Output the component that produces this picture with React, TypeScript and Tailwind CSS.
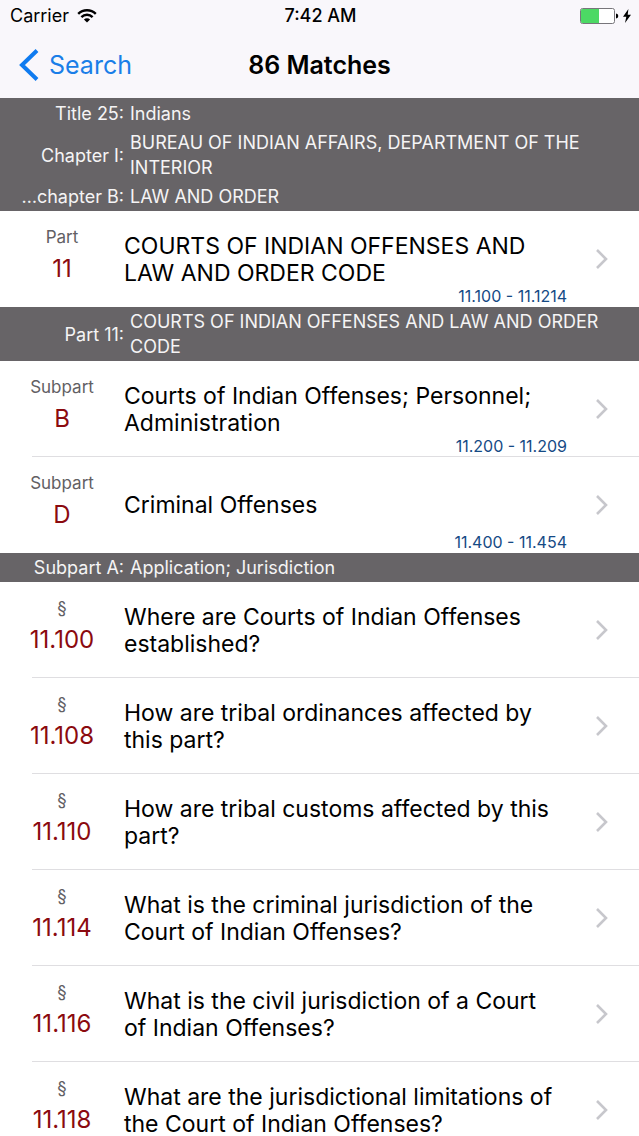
type Heading = {
	label: string;
	text: string;
};

type Match = {
	kind: string;
	number: string;
	title: string;
	range?: string;
};

type Section = {
	headings: Heading[];
	matches: Match[];
};

const sections: Section[] = [
	{
		headings: [
			{ label: "Title 25:", text: "Indians" },
			{ label: "Chapter I:", text: "BUREAU OF INDIAN AFFAIRS, DEPARTMENT OF THE INTERIOR" },
			{ label: "…chapter B:", text: "LAW AND ORDER" },
		],
		matches: [
			{
				kind: "Part",
				number: "11",
				title: "COURTS OF INDIAN OFFENSES AND LAW AND ORDER CODE",
				range: "11.100 - 11.1214",
			},
		],
	},
	{
		headings: [{ label: "Part 11:", text: "COURTS OF INDIAN OFFENSES AND LAW AND ORDER CODE" }],
		matches: [
			{
				kind: "Subpart",
				number: "B",
				title: "Courts of Indian Offenses; Personnel; Administration",
				range: "11.200 - 11.209",
			},
			{ kind: "Subpart", number: "D", title: "Criminal Offenses", range: "11.400 - 11.454" },
		],
	},
	{
		headings: [{ label: "Subpart A:", text: "Application; Jurisdiction" }],
		matches: [
			{ kind: "§", number: "11.100", title: "Where are Courts of Indian Offenses established?" },
			{ kind: "§", number: "11.108", title: "How are tribal ordinances affected by this part?" },
			{ kind: "§", number: "11.110", title: "How are tribal customs affected by this part?" },
			{ kind: "§", number: "11.114", title: "What is the criminal jurisdiction of the Court of Indian Offenses?" },
			{ kind: "§", number: "11.116", title: "What is the civil jurisdiction of a Court of Indian Offenses?" },
			{
				kind: "§",
				number: "11.118",
				title: "What are the jurisdictional limitations of the Court of Indian Offenses?",
			},
		],
	},
];

function StatusBar() {
	return (
		<div className="grid h-8 grid-cols-[1fr_auto_1fr] items-center pr-2 pl-2.5 text-[18px] leading-5">
			<div className="flex items-center gap-2">
				<span>Carrier</span>
				<svg width="20" height="14" viewBox="0 0 20 14" fill="none" stroke="#000" strokeWidth="2.4" aria-hidden="true">
					<path d="M1.2 4.8a12.6 12.6 0 0 1 17.6 0" />
					<path d="M4.4 8.1a8 8 0 0 1 11.2 0" />
					<path d="M10 13.6 6.9 10.5a4.4 4.4 0 0 1 6.2 0z" fill="#000" stroke="none" />
				</svg>
			</div>

			<span className="font-medium">7:42 AM</span>

			<div className="flex items-center justify-end gap-1">
				<svg width="39" height="16" viewBox="0 0 39 16" aria-hidden="true">
					<rect x="0.5" y="0.5" width="34" height="15" rx="2" fill="#fff" stroke="#77757a" />
					<path d="M2.5 1H19v14H2.5A1.5 1.5 0 0 1 1 13.5v-11A1.5 1.5 0 0 1 2.5 1z" fill="#4cd964" />
					<path d="M36 5.5c2 .4 2.2 1.4 2.2 2.5s-.2 2.1-2.2 2.5z" fill="#000" />
				</svg>
				<svg width="8" height="14" viewBox="0 0 8 14" aria-hidden="true">
					<path d="M5.4 0 0 7.800h3.300L2 14 8 5.700H4.700z" fill="#000" />
				</svg>
			</div>
		</div>
	);
}

function NavBar() {
	return (
		<nav className="grid h-[66px] grid-cols-[1fr_auto_1fr] items-center px-[19px] text-[25px] leading-8">
			<button type="button" className="flex cursor-pointer items-center gap-2.5 justify-self-start text-[#1a7ee8]">
				<svg width="20" height="32" viewBox="0 0 20 32" fill="none" stroke="#0f7bf0" strokeWidth="4" aria-hidden="true">
					<path d="M18 1.500 3 16l15 14.500" />
				</svg>
				Search
			</button>
			<h1 className="font-semibold">86 Matches</h1>
		</nav>
	);
}

function SectionHeading({ headings }: { headings: Heading[] }) {
	return (
		<div className="bg-[#676467] text-[18px] leading-[25px] text-[#f5f4f5]">
			{headings.map((heading) => (
				<h2 key={heading.label} className="flex items-center gap-1.5 py-0.5 pr-4">
					<span className="w-31 shrink-0 text-right">{heading.label}</span>
					<span>{heading.text}</span>
				</h2>
			))}
		</div>
	);
}

function MatchRow({ match }: { match: Match }) {
	return (
		<li className="ml-8 border-b border-[#dfdee1] last:border-transparent">
			<a href="#" className="flex h-[95px] items-stretch pr-7">
				<div className="flex w-15 shrink-0 flex-col items-center pt-4 whitespace-nowrap">
					<span className="text-[17px] leading-5 text-[#626064]">{match.kind}</span>
					<span className="mt-2 text-[24px] leading-7 text-[#8b0a0f]">{match.number}</span>
				</div>

				<div className="ml-8 grid flex-1 grid-rows-[21px_1fr_19px]">
					<span className="row-start-2 self-center pr-2 text-[23px] leading-[27px]">{match.title}</span>
					{match.range && (
						<span className="row-start-3 justify-self-end text-[16px] leading-[18px] text-[#154a85]">{match.range}</span>
					)}
				</div>

				<svg
					className="ml-7 shrink-0 self-center"
					width="16"
					height="20"
					viewBox="0 0 16 20"
					fill="none"
					stroke="#c7c7cc"
					strokeWidth="2.600"
					aria-hidden="true"
				>
					<path d="M2 1 11 10 2 19" />
				</svg>
			</a>
		</li>
	);
}

export default function App() {
	return (
		<div className="min-h-screen bg-white font-['Inter',sans-serif] text-black">
			<header className="border-b border-[#676467] bg-[#f9f7fb]">
				<StatusBar />
				<NavBar />
			</header>

			<main>
				{sections.map((section) => (
					<section key={section.headings[0].label}>
						<SectionHeading headings={section.headings} />
						<ul>
							{section.matches.map((match) => (
								<MatchRow key={match.number} match={match} />
							))}
						</ul>
					</section>
				))}
			</main>
		</div>
	);
}
